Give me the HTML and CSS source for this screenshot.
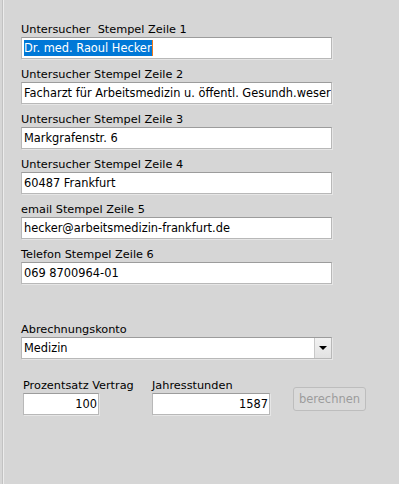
FILE: index.html
```html
<!DOCTYPE html>
<html lang="de">
<head>
    <meta charset="UTF-8">
    <title>Stempel</title>
    <link rel="stylesheet" href="styles.css">
</head>
<body>

<div class="panel">
    <div class="group">
        <div class="label">Untersucher&nbsp; Stempel Zeile 1</div>
        <div class="field"><span class="selected">Dr. med. Raoul Hecker</span></div>
    </div>
    <div class="group">
        <div class="label">Untersucher Stempel Zeile 2</div>
        <div class="field">Facharzt für Arbeitsmedizin u. öffentl. Gesundh.weser</div>
    </div>
    <div class="group">
        <div class="label">Untersucher Stempel Zeile 3</div>
        <div class="field">Markgrafenstr. 6</div>
    </div>
    <div class="group">
        <div class="label">Untersucher Stempel Zeile 4</div>
        <div class="field">60487 Frankfurt</div>
    </div>
    <div class="group">
        <div class="label">email Stempel Zeile 5</div>
        <div class="field">hecker@arbeitsmedizin-frankfurt.de</div>
    </div>
    <div class="group">
        <div class="label">Telefon Stempel Zeile 6</div>
        <div class="field">069 8700964-01</div>
    </div>

    <div class="group konto">
        <div class="label">Abrechnungskonto</div>
        <div class="field select">
            <span class="select-value">Medizin</span>
            <span class="select-btn"><span class="arrow"></span></span>
        </div>
    </div>

    <div class="calc-row">
        <div class="calc-col col-prozent">
            <div class="label">Prozentsatz Vertrag</div>
            <div class="field num">100</div>
        </div>
        <div class="calc-col col-stunden">
            <div class="label">Jahresstunden</div>
            <div class="field num">1587</div>
        </div>
        <button type="button" class="btn" disabled>berechnen</button>
    </div>
</div>

</body>
</html>
```

FILE: styles.css
```css
body {
    margin: 0;
    padding: 0;
    background-color: #d6d6d6;
    font-family: "DejaVu Sans", Tahoma, sans-serif;
    font-size: 11.3px;
    color: #000;
}
.panel {
    margin-left: 2px;
    min-height: 484px;
    box-sizing: border-box;
    padding: 22px 0 0 18px;
    border-left: 1px solid #c2c2c2;
    box-shadow: inset 1px 0 0 #ececec;
}
.group {
    width: 311px;
    margin-bottom: 8px;
}
.label {
    height: 15px;
    line-height: 15px;
    white-space: nowrap;
}
.field {
    height: 22px;
    line-height: 20px;
    box-sizing: border-box;
    padding: 0 1px 0 2px;
    font-size: 11.4px;
    background-color: #fff;
    border: 1px solid #b8b8b8;
    border-top-color: #9c9c9c;
    box-shadow: 1px 1px 0 #e6e6e6;
    white-space: nowrap;
    overflow: hidden;
}
.selected {
    background-color: #0078d7;
    color: #fff;
    padding: 1px 0;
    border-right: 1px solid #f07a1a;
}

/* Abrechnungskonto */
.konto {
    margin-top: 38px;
}
.select {
    display: flex;
    padding: 0 0 0 2px;
}
.select-value {
    flex: 1;
}
.select-btn {
    width: 16px;
    border-left: 1px solid #c8c8c8;
    background: linear-gradient(#f2f2f2, #e2e2e2);
    display: flex;
    align-items: center;
    justify-content: center;
}
.arrow {
    width: 0;
    height: 0;
    border-left: 4px solid transparent;
    border-right: 4px solid transparent;
    border-top: 4px solid #000;
}

/* Prozentsatz / Jahresstunden */
.calc-row {
    display: flex;
    align-items: flex-start;
    margin-top: 19px;
    padding-left: 2px;
}
.calc-col .field {
    text-align: right;
}
.col-prozent {
    width: 129px;
}
.col-prozent .field {
    width: 76px;
}
.col-stunden {
    width: 141px;
}
.col-stunden .field {
    width: 118px;
}
.btn {
    margin-top: 9px;
    width: 73px;
    height: 24px;
    padding: 0;
    font-family: inherit;
    font-size: 11.5px;
    color: #9c9c9c;
    background-color: #dadada;
    border: 1px solid #bdbdbd;
    border-radius: 3px;
}
```
